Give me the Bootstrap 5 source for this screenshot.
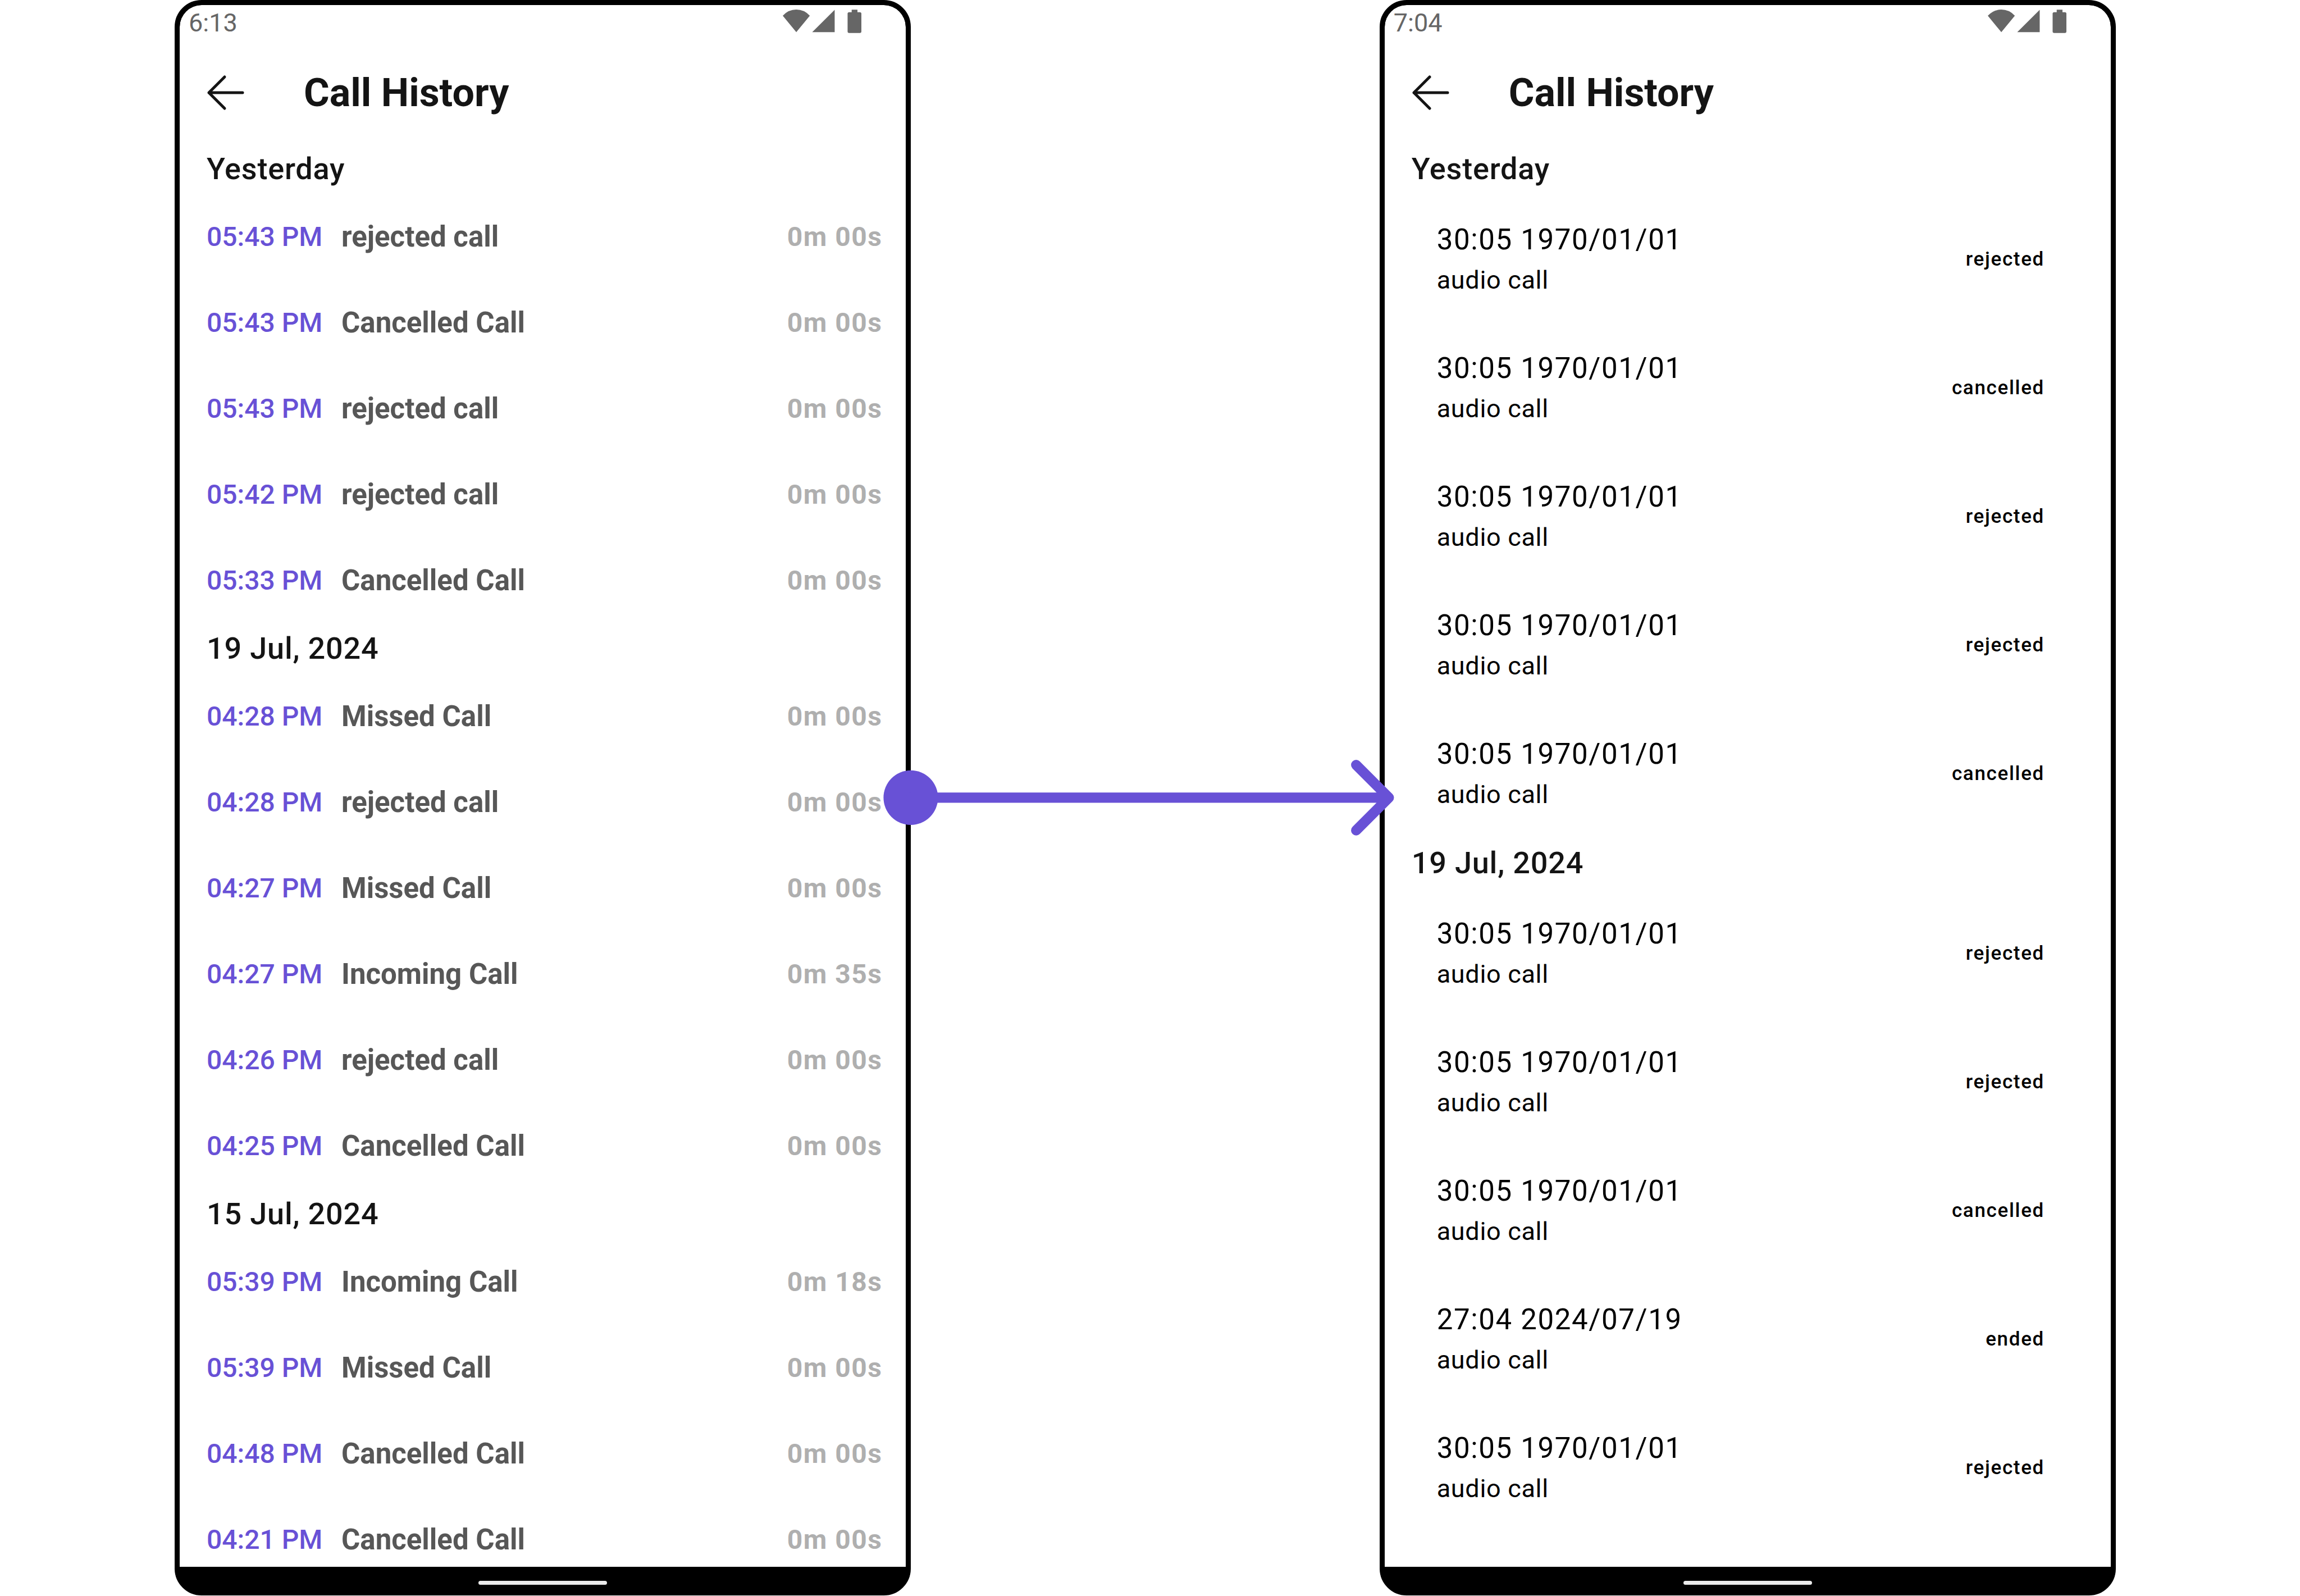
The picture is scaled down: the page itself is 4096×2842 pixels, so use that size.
<!DOCTYPE html>
<html lang="en">
<head>
<meta charset="utf-8">
<meta name="viewport" content="width=device-width, initial-scale=1">
<title>Call History</title>
<link href="https://cdn.jsdelivr.net/npm/bootstrap@5.3.0/dist/css/bootstrap.min.css" rel="stylesheet">
<style>
  :root {
    --ink: #141414;
    --accent: #6851d6;
  }
  body {
    font-family: Roboto, "Liberation Sans", sans-serif;
    background: #fff;
    color: var(--ink);
  }
  /* two devices and the space between them share the width 11 : 7 : 11 */
  .stage {
    grid-template-columns: minmax(0, 11fr) minmax(0, 7fr) minmax(0, 11fr);
    grid-template-rows: minmax(0, 1fr);
    padding: 0 328px 1px 311px;
  }
  .device { border: 9px solid #000; border-radius: 48px; background: #000; }
  .link-lane { z-index: 2; }
  .flow-arrow { flex: none; width: calc(100% + 76px); margin-left: -49px; }

  .screen { background: #fff; border-radius: 39px 39px 0 0; min-height: 0; }
  .status-bar { height: 64px; padding: 0 79px 0 16px; font-size: 45px; line-height: 64px; color: #666; }
  .status-bar svg { width: 140px; height: 42px; margin-top: 8px; }
  .app-bar { height: 183px; padding: 0 48px; gap: 105px; }
  .app-bar h1 { font-size: 70px; line-height: 84px; font-weight: 700; }
  .back svg { display: block; width: 68px; height: 64px; }

  .day { height: 89px; padding-left: 48px; font-size: 54px; line-height: 89px; font-weight: 500; letter-spacing: .015em; }

  .log-row { height: 153px; padding: 0 42px 0 48px; font-size: 48px; line-height: 60px; }
  .log-time { width: 240px; font-weight: 500; color: var(--accent); }
  .log-kind { font-size: 51px; font-weight: 700; color: #575757; }
  .log-length { font-weight: 700; letter-spacing: .03em; color: #afafaf; }

  .entries { padding-bottom: 2px; color: #000; }
  .entry { height: 229px; padding: 44px 118px 0 93px; }
  .entry-title { font-size: 51px; line-height: 76px; letter-spacing: .032em; }
  .entry-sub { font-size: 45px; line-height: 68px; letter-spacing: .015em; }
  .entry-state { font-size: 35px; line-height: 56px; font-weight: 500; letter-spacing: .048em; padding-top: 45px; }

  .nav-strip { height: 42px; padding-top: 25px; }
  .nav-pill { width: 229px; height: 7px; border-radius: 4px; background: #eaeaea; }
</style>
</head>
<body>
<svg class="d-none" aria-hidden="true">
  <symbol id="status-icons" viewBox="1529 19 154 46">
    <path fill="#666" d="M1555.500 63.300L1529 31Q1540 19 1555.500 19T1582 31ZM1630.700 19.500V63.300H1586.700ZM1664 19.200h11.300V24h4.700q3 0 3 3v34.700q0 3-3 3h-21q-3 0-3-3V27q0-3 3-3h5Z"/>
  </symbol>
  <symbol id="back-arrow" viewBox="0 0 68 64">
    <path fill="none" stroke="#141414" stroke-width="5" stroke-linecap="round" stroke-linejoin="round" d="M64 32H4M32 4L4 32l28 28"/>
  </symbol>
</svg>

<main class="stage d-grid vh-100 overflow-hidden">
  <section class="device d-flex flex-column overflow-hidden" aria-label="Call log, before">
    <div class="screen d-flex flex-column flex-grow-1 overflow-hidden">
      <div class="status-bar d-flex justify-content-between align-items-start flex-shrink-0"><span>6:13</span><svg aria-label="Wi-Fi, signal, battery"><use href="#status-icons"/></svg></div>
      <header class="app-bar d-flex align-items-center flex-shrink-0">
        <button type="button" class="back btn p-0 border-0" aria-label="Back"><svg><use href="#back-arrow"/></svg></button>
        <h1 class="m-0">Call History</h1>
      </header>
      <h2 class="day m-0 flex-shrink-0">Yesterday</h2>
      <ul class="list-unstyled m-0 flex-shrink-0">
        <li class="log-row d-flex align-items-center"><span class="log-time">05:43 PM</span><span class="log-kind">rejected call</span><span class="log-length ms-auto">0m 00s</span></li>
        <li class="log-row d-flex align-items-center"><span class="log-time">05:43 PM</span><span class="log-kind">Cancelled Call</span><span class="log-length ms-auto">0m 00s</span></li>
        <li class="log-row d-flex align-items-center"><span class="log-time">05:43 PM</span><span class="log-kind">rejected call</span><span class="log-length ms-auto">0m 00s</span></li>
        <li class="log-row d-flex align-items-center"><span class="log-time">05:42 PM</span><span class="log-kind">rejected call</span><span class="log-length ms-auto">0m 00s</span></li>
        <li class="log-row d-flex align-items-center"><span class="log-time">05:33 PM</span><span class="log-kind">Cancelled Call</span><span class="log-length ms-auto">0m 00s</span></li>
      </ul>
      <h2 class="day m-0 flex-shrink-0">19 Jul, 2024</h2>
      <ul class="list-unstyled m-0 flex-shrink-0">
        <li class="log-row d-flex align-items-center"><span class="log-time">04:28 PM</span><span class="log-kind">Missed Call</span><span class="log-length ms-auto">0m 00s</span></li>
        <li class="log-row d-flex align-items-center"><span class="log-time">04:28 PM</span><span class="log-kind">rejected call</span><span class="log-length ms-auto">0m 00s</span></li>
        <li class="log-row d-flex align-items-center"><span class="log-time">04:27 PM</span><span class="log-kind">Missed Call</span><span class="log-length ms-auto">0m 00s</span></li>
        <li class="log-row d-flex align-items-center"><span class="log-time">04:27 PM</span><span class="log-kind">Incoming Call</span><span class="log-length ms-auto">0m 35s</span></li>
        <li class="log-row d-flex align-items-center"><span class="log-time">04:26 PM</span><span class="log-kind">rejected call</span><span class="log-length ms-auto">0m 00s</span></li>
        <li class="log-row d-flex align-items-center"><span class="log-time">04:25 PM</span><span class="log-kind">Cancelled Call</span><span class="log-length ms-auto">0m 00s</span></li>
      </ul>
      <h2 class="day m-0 flex-shrink-0">15 Jul, 2024</h2>
      <ul class="list-unstyled m-0 flex-shrink-0">
        <li class="log-row d-flex align-items-center"><span class="log-time">05:39 PM</span><span class="log-kind">Incoming Call</span><span class="log-length ms-auto">0m 18s</span></li>
        <li class="log-row d-flex align-items-center"><span class="log-time">05:39 PM</span><span class="log-kind">Missed Call</span><span class="log-length ms-auto">0m 00s</span></li>
        <li class="log-row d-flex align-items-center"><span class="log-time">04:48 PM</span><span class="log-kind">Cancelled Call</span><span class="log-length ms-auto">0m 00s</span></li>
        <li class="log-row d-flex align-items-center"><span class="log-time">04:21 PM</span><span class="log-kind">Cancelled Call</span><span class="log-length ms-auto">0m 00s</span></li>
      </ul>
    </div>
    <div class="nav-strip flex-shrink-0"><div class="nav-pill mx-auto"></div></div>
  </section>

  <div class="link-lane d-flex align-items-center">
    <svg class="flow-arrow" viewBox="1727 1486 1000 148" aria-label="changes to">
      <circle cx="1780.700" cy="1560" r="53.300" fill="#6851d6"/>
      <path fill="none" stroke="#6851d6" stroke-width="20" stroke-linecap="round" stroke-linejoin="round" d="M1781 1560H2716M2652 1496l64 64-64 64"/>
    </svg>
  </div>

  <section class="device d-flex flex-column overflow-hidden" aria-label="Call log, after">
    <div class="screen d-flex flex-column flex-grow-1 overflow-hidden">
      <div class="status-bar d-flex justify-content-between align-items-start flex-shrink-0"><span>7:04</span><svg aria-label="Wi-Fi, signal, battery"><use href="#status-icons"/></svg></div>
      <header class="app-bar d-flex align-items-center flex-shrink-0">
        <button type="button" class="back btn p-0 border-0" aria-label="Back"><svg><use href="#back-arrow"/></svg></button>
        <h1 class="m-0">Call History</h1>
      </header>
      <h2 class="day m-0 flex-shrink-0">Yesterday</h2>
      <ul class="entries list-unstyled m-0 flex-shrink-0">
        <li class="entry d-flex justify-content-between align-items-start"><div><div class="entry-title">30:05 1970/01/01</div><div class="entry-sub">audio call</div></div><span class="entry-state">rejected</span></li>
        <li class="entry d-flex justify-content-between align-items-start"><div><div class="entry-title">30:05 1970/01/01</div><div class="entry-sub">audio call</div></div><span class="entry-state">cancelled</span></li>
        <li class="entry d-flex justify-content-between align-items-start"><div><div class="entry-title">30:05 1970/01/01</div><div class="entry-sub">audio call</div></div><span class="entry-state">rejected</span></li>
        <li class="entry d-flex justify-content-between align-items-start"><div><div class="entry-title">30:05 1970/01/01</div><div class="entry-sub">audio call</div></div><span class="entry-state">rejected</span></li>
        <li class="entry d-flex justify-content-between align-items-start"><div><div class="entry-title">30:05 1970/01/01</div><div class="entry-sub">audio call</div></div><span class="entry-state">cancelled</span></li>
      </ul>
      <h2 class="day m-0 flex-shrink-0">19 Jul, 2024</h2>
      <ul class="entries list-unstyled m-0 flex-shrink-0">
        <li class="entry d-flex justify-content-between align-items-start"><div><div class="entry-title">30:05 1970/01/01</div><div class="entry-sub">audio call</div></div><span class="entry-state">rejected</span></li>
        <li class="entry d-flex justify-content-between align-items-start"><div><div class="entry-title">30:05 1970/01/01</div><div class="entry-sub">audio call</div></div><span class="entry-state">rejected</span></li>
        <li class="entry d-flex justify-content-between align-items-start"><div><div class="entry-title">30:05 1970/01/01</div><div class="entry-sub">audio call</div></div><span class="entry-state">cancelled</span></li>
        <li class="entry d-flex justify-content-between align-items-start"><div><div class="entry-title">27:04 2024/07/19</div><div class="entry-sub">audio call</div></div><span class="entry-state">ended</span></li>
        <li class="entry d-flex justify-content-between align-items-start"><div><div class="entry-title">30:05 1970/01/01</div><div class="entry-sub">audio call</div></div><span class="entry-state">rejected</span></li>
      </ul>
    </div>
    <div class="nav-strip flex-shrink-0"><div class="nav-pill mx-auto"></div></div>
  </section>
</main>
<script src="https://cdn.jsdelivr.net/npm/bootstrap@5.3.0/dist/js/bootstrap.bundle.min.js"></script>
</body>
</html>
